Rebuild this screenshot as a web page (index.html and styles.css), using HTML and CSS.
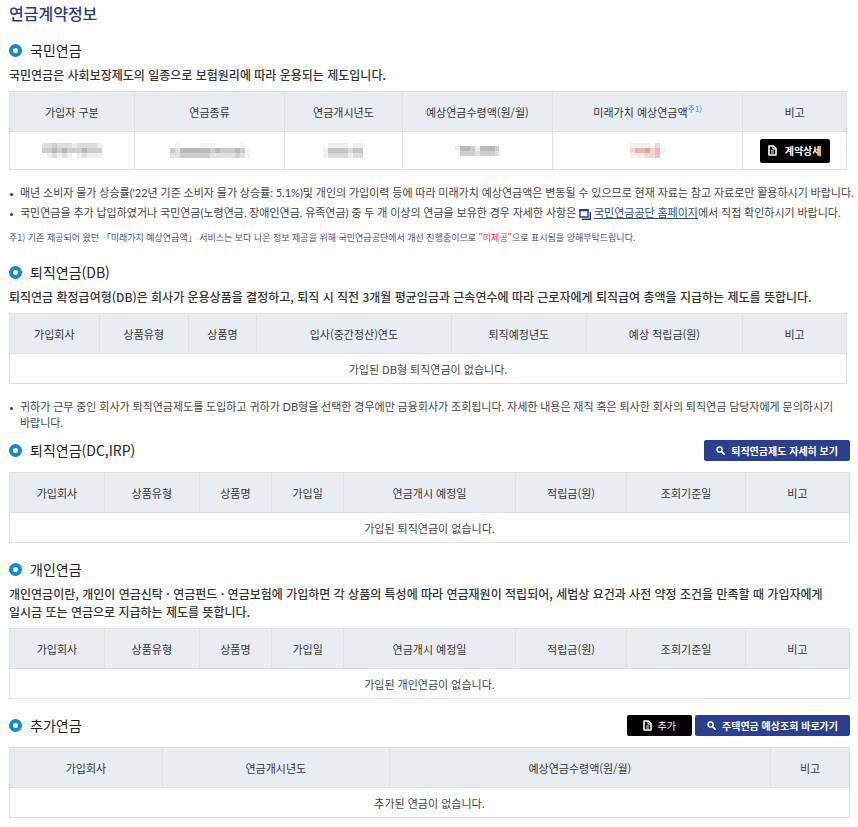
FILE: index.html
```html
<!DOCTYPE html>
<html lang="ko">
<head>
    <meta charset="UTF-8">
    <meta name="viewport" content="width=device-width, initial-scale=1.0">
    <title>연금계약정보</title>
    <link rel="stylesheet" href="styles.css">
</head>
<body>
    <!-- 공통 아이콘 -->
    <svg class="sprite" aria-hidden="true">
        <symbol id="icon-doc" viewBox="0 0 9 11">
            <path d="M1 1h4.500l2.500 2.500v6.500H1z" fill="none" stroke="currentColor" stroke-width="1.6" stroke-linejoin="round"/>
            <path d="M5 1v3h3M3 6h3M3 8h3" fill="none" stroke="currentColor" stroke-width="1"/>
        </symbol>
        <symbol id="icon-search" viewBox="0 0 10 10">
            <circle cx="4" cy="4" r="2.8" fill="none" stroke="currentColor" stroke-width="1.6"/>
            <path d="M6.2 6.2L9 9" stroke="currentColor" stroke-width="2" stroke-linecap="round"/>
        </symbol>
        <symbol id="icon-window" viewBox="0 0 12 11">
            <path d="M1 1h8v7H1z" fill="none" stroke="currentColor" stroke-width="1.4"/>
            <path d="M.3 1.2h9.4" stroke="currentColor" stroke-width="2"/>
            <path d="M11.3 3v7.2H3" fill="none" stroke="currentColor" stroke-width="1.4"/>
        </symbol>
    </svg>

    <main class="page">
        <h1>연금계약정보</h1>

        <!-- 국민연금 -->
        <section class="narrow">
            <div class="section-head">
                <h2>국민연금</h2>
            </div>
            <p class="desc">국민연금은 사회보장제도의 일종으로 보험원리에 따라 운용되는 제도입니다.</p>
            <table class="national">
                <thead>
                    <tr>
                        <th>가입자 구분</th>
                        <th>연금종류</th>
                        <th>연금개시년도</th>
                        <th>예상연금수령액(원/월)</th>
                        <th>미래가치 예상연금액<sup>주1)</sup></th>
                        <th>비고</th>
                    </tr>
                </thead>
                <tbody>
                    <tr>
                        <td>
                            <svg class="mask" width="60" height="15" viewBox="0 0 60 15" role="img" aria-label="비공개">
                                <path fill="#dedede" d="M0 0h30v5H0zM35 0h20v5H35zM10 10h5v5h-5zM20 10h5v5h-5zM40 10h5v5h-5z"/>
                                <path fill="#eeeeee" d="M30 0h5v5h-5zM55 0h5v5h-5zM5 10h5v5H5zM15 10h5v5h-5zM25 10h5v5h-5zM35 10h5v5h-5zM45 10h15v5H45z"/>
                                <path fill="#cecece" d="M0 5h60v5H0zM10 0h5v5h-5z"/>
                                <path fill="#b8b8b8" d="M10 5h5v5h-5zM20 5h5v5h-5zM40 5h5v5h-5z"/>
                            </svg>
                        </td>
                        <td>
                            <svg class="mask" width="80" height="15" viewBox="0 0 80 15" role="img" aria-label="비공개">
                                <path fill="#f4f4f4" d="M5 0h5v5H5zM30 0h15v5H30zM70 0h5v5h-5zM75 5h5v10h-5z"/>
                                <path fill="#cccccc" d="M0 5h5v5H0zM50 5h25v5H50zM10 10h30v5H10z"/>
                                <path fill="#e0e0e0" d="M5 5h5v5H5zM0 10h10v5H0zM40 10h35v5H40z"/>
                                <path fill="#b9b9b9" d="M10 5h30v5H10zM45 5h5v5h-5zM65 5h5v5h-5z"/>
                                <path fill="#cfcfcf" d="M40 5h5v5h-5zM65 10h5v5h-5z"/>
                            </svg>
                        </td>
                        <td>
                            <svg class="mask" width="40" height="15" viewBox="0 0 40 15" role="img" aria-label="비공개">
                                <path fill="#efefef" d="M5 0h20v5H5zM30 0h10v5H30zM0 5h5v10H0zM25 10h5v5h-5z"/>
                                <path fill="#c5c5c5" d="M5 5h20v5H5zM30 5h10v5H30z"/>
                                <path fill="#dadada" d="M25 5h5v5h-5zM5 10h20v5H5zM30 10h10v5H30z"/>
                            </svg>
                        </td>
                        <td>
                            <svg class="mask" width="44" height="10" viewBox="0 0 44 10" role="img" aria-label="비공개">
                                <path fill="#efefef" d="M0 0h5v5H0zM20 0h5v5h-5z"/>
                                <path fill="#b9b9b9" d="M5 0h10v5H5zM25 0h15v5H25z"/>
                                <path fill="#cecece" d="M15 0h5v5h-5zM40 0h4v5h-4zM5 5h15v5H5zM25 5h15v5H25z"/>
                                <path fill="#dedede" d="M20 5h5v5h-5zM40 5h4v5h-4z"/>
                            </svg>
                        </td>
                        <td>
                            <svg class="mask" width="35" height="15" viewBox="0 0 35 15" role="img" aria-label="비공개">
                                <path fill="#f8eeee" d="M0 0h20v5H0zM0 10h20v5H0zM30 5h5v5h-5z"/>
                                <path fill="#f2d5d5" d="M0 5h5v5H0zM20 5h5v5h-5zM25 0h5v5h-5zM15 10h10v5H15z"/>
                                <path fill="#ebb5b5" d="M5 5h10v5H5zM25 5h5v5h-5z"/>
                                <path fill="#e8a2a2" d="M15 5h5v5h-5z"/>
                                <path fill="#e3c0c0" d="M25 10h5v5h-5z"/>
                            </svg>
                        </td>
                        <td>
                            <button type="button" class="btn btn-black btn-detail">
                                <svg class="icon-doc"><use href="#icon-doc"/></svg>계약상세
                            </button>
                        </td>
                    </tr>
                </tbody>
            </table>
            <ul class="notes notes-line">
                <li>매년 소비자 물가 상승률('22년 기준 소비자 물가 상승률: 5.1%)및 개인의 가입이력 등에 따라 미래가치 예상연금액은 변동될 수 있으므로 현재 자료는 참고 자료로만 활용하시기 바랍니다.</li>
                <li>국민연금을 추가 납입하였거나 국민연금(노령연금, 장애인연금, 유족연금) 중 두 개 이상의 연금을 보유한 경우 자세한 사항은 <svg class="icon-window"><use href="#icon-window"/></svg> <a href="#">국민연금공단 홈페이지</a>에서 직접 확인하시기 바랍니다.</li>
            </ul>
            <p class="footnote">주1) 기존 제공되어 왔던 「미래가치 예상연금액」 서비스는 보다 나은 정보 제공을 위해 국민연금공단에서 개선 진행중이므로 <em>"미제공"</em>으로 표시됨을 양해부탁드립니다.</p>
        </section>

        <!-- 퇴직연금(DB) -->
        <section class="narrow">
            <div class="section-head">
                <h2>퇴직연금(DB)</h2>
            </div>
            <p class="desc">퇴직연금 확정급여형(DB)은 회사가 운용상품을 결정하고, 퇴직 시 직전 3개월 평균임금과 근속연수에 따라 근로자에게 퇴직급여 총액을 지급하는 제도를 뜻합니다.</p>
            <table class="db">
                <thead>
                    <tr>
                        <th>가입회사</th>
                        <th>상품유형</th>
                        <th>상품명</th>
                        <th>입사(중간정산)연도</th>
                        <th>퇴직예정년도</th>
                        <th>예상 적립금(원)</th>
                        <th>비고</th>
                    </tr>
                </thead>
                <tbody>
                    <tr><td colspan="7">가입된 DB형 퇴직연금이 없습니다.</td></tr>
                </tbody>
            </table>
            <ul class="notes">
                <li>귀하가 근무 중인 회사가 퇴직연금제도를 도입하고 귀하가 DB형을 선택한 경우에만 금융회사가 조회됩니다. 자세한 내용은 재직 혹은 퇴사한 회사의 퇴직연금 담당자에게 문의하시기 바랍니다.</li>
            </ul>
        </section>

        <!-- 퇴직연금(DC,IRP) -->
        <section class="after-notes">
            <div class="section-head">
                <h2>퇴직연금(DC,IRP)</h2>
                <div class="buttons">
                    <button type="button" class="btn btn-blue">
                        <svg class="icon-search"><use href="#icon-search"/></svg>퇴직연금제도 자세히 보기
                    </button>
                </div>
            </div>
            <table class="product">
                <thead>
                    <tr>
                        <th>가입회사</th>
                        <th>상품유형</th>
                        <th>상품명</th>
                        <th>가입일</th>
                        <th>연금개시 예정일</th>
                        <th>적립금(원)</th>
                        <th>조회기준일</th>
                        <th>비고</th>
                    </tr>
                </thead>
                <tbody>
                    <tr><td colspan="8">가입된 퇴직연금이 없습니다.</td></tr>
                </tbody>
            </table>
        </section>

        <!-- 개인연금 -->
        <section>
            <div class="section-head">
                <h2>개인연금</h2>
            </div>
            <p class="desc">개인연금이란, 개인이 연금신탁 · 연금펀드 · 연금보험에 가입하면 각 상품의 특성에 따라 연금재원이 적립되어, 세법상 요건과 사전 약정 조건을 만족할 때 가입자에게 일시금 또는 연금으로 지급하는 제도를 뜻합니다.</p>
            <table class="product">
                <thead>
                    <tr>
                        <th>가입회사</th>
                        <th>상품유형</th>
                        <th>상품명</th>
                        <th>가입일</th>
                        <th>연금개시 예정일</th>
                        <th>적립금(원)</th>
                        <th>조회기준일</th>
                        <th>비고</th>
                    </tr>
                </thead>
                <tbody>
                    <tr><td colspan="8">가입된 개인연금이 없습니다.</td></tr>
                </tbody>
            </table>
        </section>

        <!-- 추가연금 -->
        <section>
            <div class="section-head">
                <h2>추가연금</h2>
                <div class="buttons">
                    <button type="button" class="btn btn-black btn-add">
                        <svg class="icon-doc"><use href="#icon-doc"/></svg>추가
                    </button>
                    <button type="button" class="btn btn-blue">
                        <svg class="icon-search"><use href="#icon-search"/></svg>주택연금 예상조회 바로가기
                    </button>
                </div>
            </div>
            <table class="extra">
                <thead>
                    <tr>
                        <th>가입회사</th>
                        <th>연금개시년도</th>
                        <th>예상연금수령액(원/월)</th>
                        <th>비고</th>
                    </tr>
                </thead>
                <tbody>
                    <tr><td colspan="4">추가된 연금이 없습니다.</td></tr>
                </tbody>
            </table>
        </section>
    </main>
</body>
</html>
```
FILE: styles.css
```css
* { box-sizing: border-box; margin: 0; padding: 0; }
body {
    font-family: 'Noto Sans CJK KR', sans-serif;
    font-size: 11px;
    line-height: 16px;
    color: #333;
    background: #fff;
    word-break: keep-all;
}
.sprite { display: none; }
.page { padding: 0 8px 0 9px; }
h1 {
    font-size: 16px;
    font-weight: 500;
    line-height: 26px;
    color: #2b3a80;
    margin-bottom: 14px;
}
section { margin-bottom: 16px; }
section:last-child { margin-bottom: 0; }
.narrow { padding-right: 3px; }
.narrow:has(+ .after-notes) { margin-bottom: 9px; }
.section-head {
    display: flex;
    align-items: center;
    justify-content: space-between;
    height: 20px;
}
h2 {
    display: flex;
    align-items: center;
    gap: 8px;
    font-size: 14px;
    font-weight: 400;
    line-height: 20px;
    color: #222;
}
h2::before {
    content: '';
    box-sizing: border-box;
    width: 13px;
    height: 13px;
    border: 4px solid #1488c8;
    border-radius: 50%;
}
.desc {
    font-size: 12px;
    font-weight: 500;
    line-height: 18px;
    margin-top: 6px;
}
.section-head + table { margin-top: 12px; }
.desc + table { margin-top: 7px; }

/* 표 */
table {
    width: 100%;
    table-layout: fixed;
    border-collapse: collapse;
}
th, td {
    border: 1px solid #dfe1e3;
    text-align: center;
    font-weight: 400;
}
th {
    height: 40px;
    background: #e8edf1;
}
td { height: 30px; color: #444; }
.national td { height: 38px; }
sup {
    font-size: 8px;
    line-height: 1;
    color: #1a94d0;
}
.mask { display: block; margin: 0 auto; shape-rendering: crispEdges; }

.national th:nth-child(1) { width: 14.9%; }
.national th:nth-child(2) { width: 18%; }
.national th:nth-child(3) { width: 14%; }
.national th:nth-child(4) { width: 18%; }
.national th:nth-child(6) { width: 12.4%; }

.db th:nth-child(1),
.db th:nth-child(2) { width: 10.7%; }
.db th:nth-child(3) { width: 8.1%; }
.db th:nth-child(5) { width: 16.1%; }
.db th:nth-child(6) { width: 18.7%; }
.db th:nth-child(7) { width: 12.4%; }

.product th:nth-child(1),
.product th:nth-child(2) { width: 11.3%; }
.product th:nth-child(3),
.product th:nth-child(4) { width: 8.6%; }
.product th:nth-child(6) { width: 13.3%; }
.product th:nth-child(7) { width: 14.1%; }
.product th:nth-child(8) { width: 12.4%; }

.extra th:nth-child(1) { width: 18.2%; }
.extra th:nth-child(2) { width: 27%; }
.extra th:nth-child(4) { width: 9.4%; }

/* 안내 문구 */
.notes {
    list-style: none;
    margin-top: 15px;
    font-family: Lato, 'Noto Sans CJK KR', sans-serif;
}
.notes li {
    position: relative;
    padding-left: 11px;
    color: #444;
}
.notes li + li { margin-top: 4px; }
.notes li::before {
    content: '';
    position: absolute;
    left: 1px;
    top: 8px;
    width: 3px;
    height: 3px;
    border-radius: 50%;
    background: #2b3a80;
}
.notes a { color: #2b4a90; }
.footnote {
    margin-top: 9px;
    font-size: 9px;
    color: #4a5080;
}
.footnote em { font-style: normal; color: #e03030; }

@media (min-width: 850px) {
    .notes-line { white-space: nowrap; }
}

/* 버튼 */
.buttons { display: flex; gap: 3px; }
.btn {
    display: inline-flex;
    align-items: center;
    justify-content: center;
    gap: 6px;
    height: 21px;
    padding: 0 12px;
    border: 0;
    border-radius: 2px;
    font-family: inherit;
    font-size: 10px;
    font-weight: 700;
    color: #fff;
    cursor: pointer;
}
.btn-black { background: #000; }
.btn-blue { background: #2b3f8f; }
.btn-detail { height: 24px; padding: 0 8px; gap: 8px; vertical-align: middle; }
.btn-add { padding: 0 16px; font-weight: 400; }
.icon-doc { width: 9px; height: 11px; }
.icon-search { width: 9px; height: 9px; }
.icon-window { width: 12px; height: 11px; color: #2b3a80; vertical-align: middle; }
```
